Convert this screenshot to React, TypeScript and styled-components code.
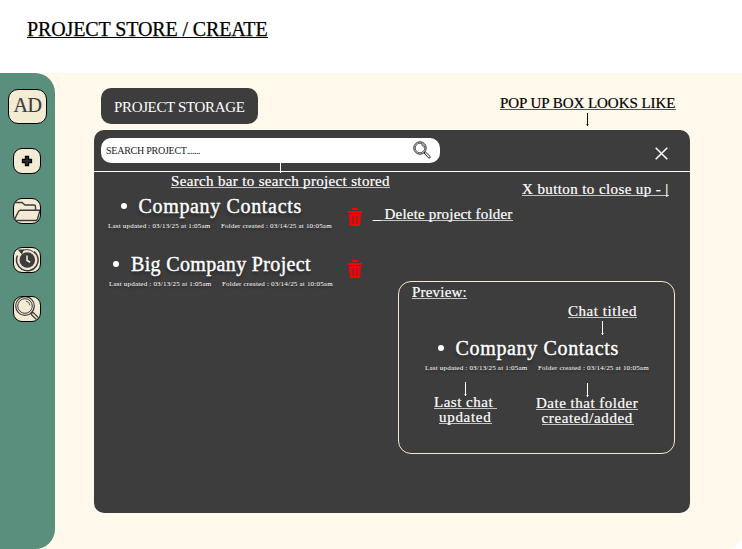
import React from "react";
import styled, { createGlobalStyle } from "styled-components";

const Global = createGlobalStyle`
  * { box-sizing: border-box; }
  body { margin: 0; background: #fff; }
`;

const ink = "#3d3d3d";
const cream = "#fff9eb";
const sand = "#f4ebd5";

const Page = styled.div`
  position: relative;
  width: 742px;
  height: 549px;
  overflow: hidden;
  display: flex;
  flex-direction: column;
  font-family: "Liberation Serif", serif;
  color: #000;
`;

const PageHeader = styled.header`
  height: 73px;
  padding: 18px 27px 0;
`;

const PageTitle = styled.h1`
  margin: 0;
  width: 241px;
  height: 20px;
  border-bottom: 1px solid #000;
  font-size: 20px;
  line-height: 22px;
  font-weight: 400;
  letter-spacing: -0.12px;
  white-space: nowrap;
  -webkit-text-stroke: 0.25px #000;
`;

const Board = styled.div`
  flex: 1;
  display: flex;
  background: ${cream};
  border-bottom-right-radius: 15px;
`;

const Sidebar = styled.nav`
  width: 55px;
  padding: 16px 0 0 8px;
  display: flex;
  flex-direction: column;
  align-items: flex-start;
  background: #5a8f7e;
  border-radius: 0 20px 20px 0;
`;

const Avatar = styled.div`
  width: 39px;
  height: 35px;
  margin-bottom: 24px;
  border: 1px solid #000;
  border-radius: 10px;
  background: ${sand};
  color: ${ink};
  font-size: 20px;
  line-height: 31px;
  text-align: center;
  letter-spacing: -0.5px;
  -webkit-text-stroke: 0.2px ${ink};
`;

const NavButton = styled.button<{ $gap?: number }>`
  width: 28px;
  height: 26px;
  margin: 0 0 ${(p) => p.$gap ?? 23}px 5px;
  padding: 0;
  display: block;
  border: 1px solid #000;
  border-radius: 9px;
  background: ${sand};
  overflow: hidden;
  svg { display: block; }
`;

const Main = styled.main`
  flex: 1;
  padding: 15px 52px 36px 39px;
  display: flex;
  flex-direction: column;
`;

const Tab = styled.div`
  width: 157px;
  height: 36px;
  margin: 0 0 6px 7px;
  padding-left: 13px;
  border-radius: 10px;
  background: ${ink};
  color: #fff;
  font-size: 15px;
  line-height: 38px;
  letter-spacing: -0.35px;
  white-space: nowrap;
`;

const Panel = styled.section`
  width: 596px;
  height: 383px;
  border-radius: 10px;
  background: ${ink};
  color: #fff;
`;

const PanelHeader = styled.div`
  height: 42px;
  padding: 8px 22px 0 7px;
  display: flex;
  justify-content: space-between;
  border-bottom: 1px solid #fff;
`;

const SearchBox = styled.div`
  width: 339px;
  height: 25px;
  padding: 0 8px 0 5px;
  display: flex;
  justify-content: space-between;
  border-radius: 10px;
  background: #fff;
  color: #222;
  font-size: 10px;
  line-height: 26px;
  letter-spacing: -0.25px;
`;

const Dots = styled.span`
  letter-spacing: -0.6px;
`;

const SearchIcon = styled.svg`
  margin-top: 3px;
`;

const CloseIcon = styled.svg`
  margin-top: 9px;
`;

const PanelBody = styled.div`
  display: flex;
  padding-left: 12px;
`;

const ProjectList = styled.div`
  width: 242px;
  padding-top: 22px;
`;

const TrashColumn = styled.div`
  padding-top: 36px;
  display: flex;
  flex-direction: column;
  gap: 34px;
  svg { display: block; }
`;

const Folder = styled.article<{ $inset: number }>`
  height: 58px;
  padding-left: ${(p) => p.$inset}px;
`;

const FolderName = styled.h2<{ $indent: number; $spacing: number }>`
  height: 24px;
  margin: 0;
  padding-left: ${(p) => p.$indent}px;
  display: flex;
  align-items: center;
  gap: 12px;
  font-size: 20px;
  line-height: 22px;
  font-weight: 400;
  letter-spacing: ${(p) => p.$spacing}px;
  white-space: nowrap;
  text-shadow: 0 3px 3px rgba(0, 0, 0, 0.4);
  -webkit-text-stroke: 0.4px #fff;
  &::before {
    content: "";
    width: 6px;
    height: 6px;
    border-radius: 50%;
    background: #fff;
  }
`;

const FolderMeta = styled.div`
  display: flex;
  font-size: 7px;
  line-height: 9px;
  margin-top: 4px;
  letter-spacing: 0.2px;
  white-space: nowrap;
  text-shadow: 0 2px 2px rgba(0, 0, 0, 0.3);
  span:first-child { width: 113px; }
`;

const Preview = styled.div`
  width: 277px;
  height: 173px;
  margin: 109px 0 0 36px;
  padding: 54px 0 0 26px;
  border: 1px solid #f4e9cd;
  border-radius: 13px;
`;

/* Annotations float above the mock-up they describe. */
const Note = styled.div<{ $x: number; $y: number; $w: number; $ls: number; $dark?: boolean }>`
  position: absolute;
  left: ${(p) => p.$x}px;
  top: ${(p) => p.$y}px;
  width: ${(p) => p.$w}px;
  height: 15px;
  border-bottom: 1px solid ${(p) => (p.$dark ? "#555" : "#c4c4c4")};
  color: ${(p) => (p.$dark ? "#000" : "#fff")};
  font-size: 15px;
  line-height: 16px;
  letter-spacing: ${(p) => p.$ls}px;
  white-space: pre;
  -webkit-text-stroke: 0.2px currentColor;
`;

const Tick = styled.div<{ $x: number; $y: number; $h: number; $dark?: boolean }>`
  position: absolute;
  left: ${(p) => p.$x}px;
  top: ${(p) => p.$y}px;
  width: 1px;
  height: ${(p) => p.$h}px;
  background: ${(p) => (p.$dark ? "#111" : "#fff")};
  &::after {
    content: "";
    position: absolute;
    left: -1px;
    bottom: 1px;
    width: 3px;
    height: 1px;
    background: inherit;
    opacity: 0.5;
  }
`;

const Magnifier = () => (
  <g fill="none" stroke="#222">
    <circle cx="7" cy="7" r="6.2" strokeWidth="1" />
    <circle cx="7" cy="7" r="4.8" strokeWidth="0.8" />
    <path d="M8 3.6a3.6 3.6 0 0 1 2.6 2.8" strokeWidth="0.7" />
    <path d="M11 12l1.2-1.2 4.9 4.6c.8.9-.7 2.3-1.6 1.5zM11.2 11.2l1 1" strokeWidth="1" />
  </g>
);

const Trash = () => (
  <svg width="14" height="18" viewBox="0 0 14 18">
    <path
      fill="#f00"
      fillRule="evenodd"
      d="M4 0h6v2H4zM0 3h14v2H0zM1 6h12l-1 12H2zM4.6 8v8h1V8zM8.4 8v8h1V8z"
    />
  </svg>
);

const Meta = () => (
  <FolderMeta>
    <span>Last updated : 03/13/25 at 1:05am</span>
    <span>Folder created : 03/14/25 at 10:05am</span>
  </FolderMeta>
);

export default function App() {
  return (
    <Page>
      <Global />
      <PageHeader>
        <PageTitle>PROJECT STORE / CREATE</PageTitle>
      </PageHeader>
      <Board>
        <Sidebar>
          <Avatar>AD</Avatar>
          <NavButton $gap={24} aria-label="New">
            <svg width="26" height="24" viewBox="0 0 26 24">
              <path d="M11.5 7.5h3v3h3v3h-3v3h-3v-3h-3v-3h3z" fill="#333" stroke="#000" strokeWidth="1.3" />
            </svg>
          </NavButton>
          <NavButton aria-label="Folders">
            <svg width="26" height="24" viewBox="0 0 26 24" fill="none" stroke={ink} strokeWidth="1.4">
              <path d="M0 4.5Q.5 3.5 2 3.5H8l3 2.5h9q1.5 0 1.5 1.5V11M.5 20.5L4.5 12.5Q5 11.2 6.5 11.2H26L23.5 20Q23 21.5 21.5 21.5H2" />
            </svg>
          </NavButton>
          <NavButton aria-label="History">
            <svg width="26" height="24" viewBox="0 0 26 24">
              <circle cx="13.3" cy="12" r="7.8" fill={ink} />
              <path d="M13 7.5v5l3.2 1.8" fill="none" stroke={sand} strokeWidth="1.6" />
              <path d="M3.5 7.5A10.8 10.8 0 1 0 20 3.5" fill="none" stroke={ink} strokeWidth="1.5" />
              <path d="M3.5 1.5l6.5 0-2 5z" fill={ink} />
              <path d="M9 2.2q8-2.4 13 4.5" fill="none" stroke={ink} />
            </svg>
          </NavButton>
          <NavButton aria-label="Search">
            <svg width="26" height="24" viewBox="0 0 26 24" fill="none" stroke={ink}>
              <circle cx="11" cy="9" r="9.3" strokeWidth="1.2" />
              <circle cx="11" cy="9" r="7.3" />
              <path d="M12 4a5 5 0 0 1 4 4.5" strokeWidth="0.8" />
              <path d="M16.8 17l2-2 7 7M16.8 17l7 7M17 15l1.5 1.5" strokeWidth="1.2" />
            </svg>
          </NavButton>
        </Sidebar>
        <Main>
          <Tab>PROJECT STORAGE</Tab>
          <Panel>
            <PanelHeader>
              <SearchBox>
                <span>SEARCH PROJECT<Dots>.......</Dots></span>
                <SearchIcon width="19" height="19" viewBox="0 0 19 19"><Magnifier /></SearchIcon>
              </SearchBox>
              <CloseIcon width="13" height="13" viewBox="0 0 13 13">
                <path d="M.7.7l11.6 11.6M12.3.7L.7 12.3" stroke="#fff" strokeWidth="1.5" />
              </CloseIcon>
            </PanelHeader>
            <PanelBody>
              <ProjectList>
                <Folder $inset={2}>
                  <FolderName $indent={12.5} $spacing={0.66}>Company Contacts</FolderName>
                  <Meta />
                </Folder>
                <Folder $inset={3}>
                  <FolderName $indent={4} $spacing={0.35}>Big Company Project</FolderName>
                  <Meta />
                </Folder>
              </ProjectList>
              <TrashColumn>
                <Trash />
                <Trash />
              </TrashColumn>
              <Preview>
                <FolderName $indent={12.5} $spacing={0.66}>Company Contacts</FolderName>
                <Meta />
              </Preview>
            </PanelBody>
          </Panel>
        </Main>
      </Board>

      <Note $x={500} $y={95} $w={176} $ls={-0.05} $dark>POP UP BOX LOOKS LIKE</Note>
      <Tick $x={587} $y={113} $h={13} $dark />
      <Tick $x={280} $y={163} $h={10} />
      <Note $x={171} $y={173} $w={219} $ls={0.34}>Search bar to search project stored</Note>
      <Note $x={522} $y={181} $w={147} $ls={0.4}>X button to close up - |</Note>
      <Note $x={373} $y={206} $w={140} $ls={0.18}>_ Delete project folder</Note>
      <Note $x={412} $y={284} $w={55} $ls={0.2}>Preview:</Note>
      <Note $x={568} $y={303} $w={69} $ls={0.55}>Chat titled</Note>
      <Tick $x={602} $y={321} $h={14} />
      <Tick $x={465} $y={382} $h={14} />
      <Note $x={434} $y={394} $w={63} $ls={0.5}>{"Last chat "}</Note>
      <Note $x={439} $y={409} $w={53} $ls={0.7}>updated</Note>
      <Tick $x={587} $y={383} $h={14} />
      <Note $x={536} $y={395} $w={102} $ls={0.5}>Date that folder</Note>
      <Note $x={541.5} $y={410} $w={92} $ls={0.63}>created/added</Note>
    </Page>
  );
}
